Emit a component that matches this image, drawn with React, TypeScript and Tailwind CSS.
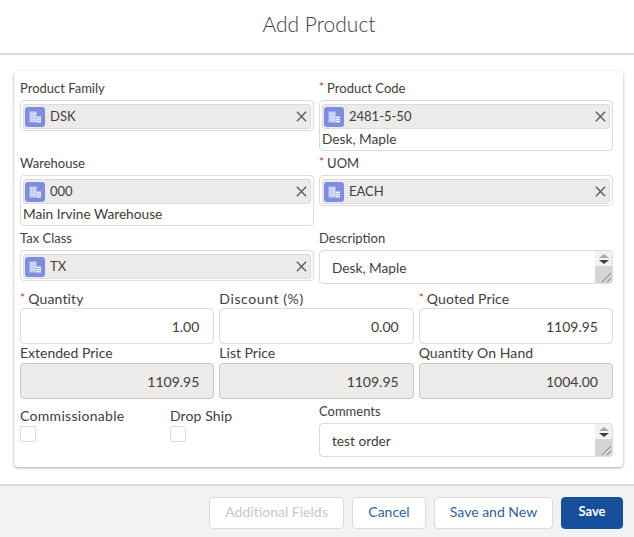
const FONT = "font-['Lato','Noto_Sans',sans-serif]";

function EntityIcon() {
  return (
    <span className="flex h-5 w-5 shrink-0 items-center justify-center rounded-[3px] bg-[#7f8de1]">
      <svg viewBox="0 0 20 20" className="h-5 w-5">
        <path fill="#c4cbf2" d="M4.5 4.5h7.2v11H4.500z" />
        <path fill="#fff" fillOpacity="0.45" d="M5.500 6h1.800v1.400H5.500zM8.500 6h1.800v1.400H8.500zM5.500 9h1.800v1.400H5.500zM8.500 9h1.800v1.400H8.500zM5.500 12h1.800v1.400H5.500zM8.500 12h1.800v1.400H8.500z" />
        <path fill="#eef0fb" d="M11.700 9.500h4.300v6h-4.300z" />
        <path fill="#7f8de1" d="M12.500 11h1v1h-1zM14.300 11h1v1h-1zM12.500 13h1v1h-1zM14.300 13h1v1h-1z" />
      </svg>
    </span>
  );
}

function Label({ text, required, className = "" }: { text: string; required?: boolean; className?: string }) {
  return (
    <div className={`flex items-center leading-none text-[#3e3e3c] ${className}`}>
      {required && <span className="mr-[3px] -mt-[3px] text-[12px] text-[#c23934]">*</span>}
      {text}
    </div>
  );
}

function Lookup({ label, value, sub, required }: { label: string; value: string; sub?: string; required?: boolean }) {
  return (
    <div className="h-[70px]">
      <Label text={label} required={required} className="h-5 pb-[3px] text-[13px]" />
      <div className="rounded-[4px] border border-[#dddbda] bg-white px-[2px] pt-[3px]">
        <div className="mb-[1px] flex h-[25px] items-center rounded-[3px] border border-[#dddbda] bg-[#ecebea] pl-[1px] pr-[2px] text-[13px] text-[#3e3e3c]">
          <EntityIcon />
          <span className="ml-[5px] flex-1">{value}</span>
          <svg viewBox="0 0 14 14" className="h-[13px] w-[13px]" stroke="#605e5c" strokeWidth="1.5">
            <path d="M2 2l10 10M12 2L2 12" />
          </svg>
        </div>
        {sub && <div className="h-[20px] text-[13.7px] leading-[18px] text-[#3e3e3c]">{sub}</div>}
      </div>
    </div>
  );
}

function TextArea({ label, value }: { label: string; value: string }) {
  return (
    <div>
      <Label text={label} className="h-5 pb-[3px] text-[13px]" />
      <div className="flex h-[34px] overflow-hidden rounded-[4px] border border-[#dddbda] bg-white">
        <div className="flex-1 pl-[12px] pt-[7px] text-[13.7px] leading-[20px] text-[#3e3e3c]">{value}</div>
        <div className="flex w-[17px] flex-col">
          <div className="flex h-[15px] flex-col items-center justify-center gap-[2px] bg-[#f2f2f2]">
            <span className="h-0 w-0 border-x-[5px] border-b-[4px] border-x-transparent border-b-[#a8a8a8]" />
            <span className="h-0 w-0 border-x-[5px] border-t-[4px] border-x-transparent border-t-[#3e3e3c]" />
          </div>
          <div className="flex flex-1 items-end justify-end bg-[#d4d4d4]">
            <svg viewBox="0 0 12 12" className="h-3 w-3" stroke="#666" strokeWidth="0.8">
              <path d="M2 11L11 2M7 11l4-4" />
            </svg>
          </div>
        </div>
      </div>
    </div>
  );
}

function NumberField({ label, value, required, readOnly, labelClass }: { label: string; value: string; required?: boolean; readOnly?: boolean; labelClass: string }) {
  return (
    <div>
      <Label text={label} required={required} className={labelClass} />
      <div
        className={`flex h-[36px] items-center justify-end rounded-[4px] border pr-[14px] text-[14px] text-[#3e3e3c] ${
          readOnly ? "border-[#c9c7c5] bg-[#ecebea]" : "border-[#dddbda] bg-white"
        }`}
      >
        {value}
      </div>
    </div>
  );
}

function Check({ label, className, labelClass }: { label: string; className: string; labelClass: string }) {
  return (
    <div className={className}>
      <Label text={label} className={`h-[19px] pb-[2px] text-[14px] ${labelClass}`} />
      <div className="h-4 w-4 rounded-[2px] border border-[#dddbda] bg-white" />
    </div>
  );
}

function Button({ children, className }: { children: string; className: string }) {
  return (
    <button className={`h-[32px] rounded-[4px] border pb-[3px] ${className}`}>{children}</button>
  );
}

export default function App() {
  return (
    <div className={`${FONT} flex h-[537px] w-[634px] flex-col overflow-hidden bg-white`}>
      <div className="flex h-[55px] items-center justify-center border-b-2 border-[#dddbda] pb-[5px] pl-[4px] text-[21px] font-light text-[#3e3e3c]">
        Add Product
      </div>
      <div className="flex-1 px-[14px] pt-[16px] pr-[11px]">
        <div className="h-[396px] rounded-[4px] bg-white pl-[6px] pr-[10px] pt-[9px] shadow-[0_1px_3px_0_rgba(0,0,0,0.35)]">
          <div className="grid grid-cols-2 gap-x-[5px] gap-y-[5px]">
            <Lookup label="Product Family" value="DSK" />
            <Lookup label="Product Code" value="2481-5-50" sub="Desk, Maple" required />
            <Lookup label="Warehouse" value="000" sub="Main Irvine Warehouse" />
            <Lookup label="UOM" value="EACH" required />
            <Lookup label="Tax Class" value="TX" />
            <TextArea label="Description" value="Desk, Maple" />
          </div>
          <div className="mt-[-10px] grid grid-cols-3 gap-x-[5px]">
            <NumberField label="Quantity" value="1.00" required labelClass="h-[18px] text-[14px] tracking-[0.15px]" />
            <NumberField label="Discount (%)" value="0.00" labelClass="h-[18px] text-[14px] tracking-[0.6px]" />
            <NumberField label="Quoted Price" value="1109.95" required labelClass="h-[18px] text-[14px] tracking-[0.1px]" />
            <NumberField label="Extended Price" value="1109.95" readOnly labelClass="h-[19px] pb-[2px] text-[14px]" />
            <NumberField label="List Price" value="1109.95" readOnly labelClass="h-[19px] pb-[2px] text-[14px]" />
            <NumberField label="Quantity On Hand" value="1004.00" readOnly labelClass="h-[19px] pb-[2px] text-[14px] tracking-[0.1px]" />
          </div>
          <div className="mt-[4px] flex">
            <div className="flex w-[299px] pt-[4px]">
              <Check label="Commissionable" className="w-[150px]" labelClass="tracking-[0.3px]" />
              <Check label="Drop Ship" className="w-[149px]" labelClass="tracking-[0.1px]" />
            </div>
            <div className="flex-1">
              <TextArea label="Comments" value="test order" />
            </div>
          </div>
        </div>
      </div>
      <div className="flex h-[53px] justify-end gap-2 border-t-2 border-[#dddbda] bg-[#f3f2f2] pr-[11px] pt-[11px]">
        <Button className="w-[135px] border-[#dddbda] bg-white text-[14px] text-[#c9c7c5]">Additional Fields</Button>
        <Button className="w-[74px] border-[#dddbda] bg-white text-[14px] text-[#31619c]">Cancel</Button>
        <Button className="w-[119px] border-[#dddbda] bg-white text-[14px] text-[#31619c]">Save and New</Button>
        <Button className="w-[62px] border-[#16509a] bg-[#16509a] text-[13px] font-bold text-white">Save</Button>
      </div>
    </div>
  );
}
